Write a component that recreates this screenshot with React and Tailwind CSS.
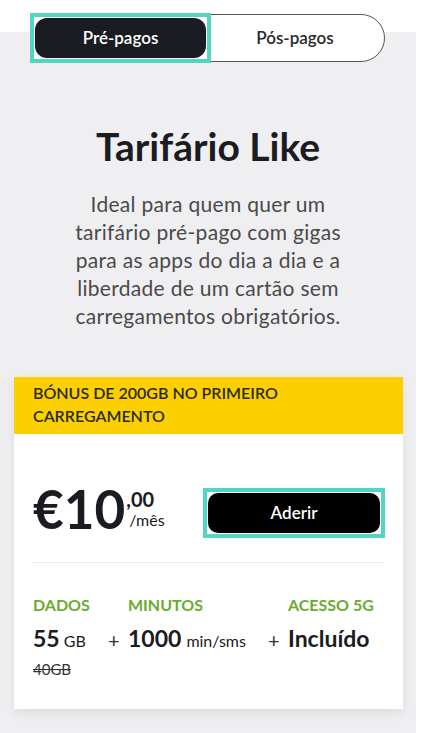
export default function App() {
  return (
    <div className="w-[422px] h-[733px] bg-white overflow-hidden" style={{ fontFamily: 'Lato, "Open Sans", sans-serif' }}>
      {/* Toggle */}
      <div className="relative z-10 pt-[13px] pl-[30px]">
        <div className="relative w-[355px] h-[49px]">
          <div className="absolute left-[5px] top-[1px] w-[350px] h-[48px] rounded-full border-[1.5px] border-[#555] bg-white flex">
            <div className="w-[170px]" />
            <div className="flex-1 flex items-center justify-center text-[17px] font-semibold text-[#2a2a2a]">Pós-pagos</div>
          </div>
          <div className="absolute left-0 top-0 w-[181px] h-[50px] border-[4px] border-[#52d6c1] p-[1px] bg-white">
            <div className="w-full h-full rounded-[12px] bg-[#1b1b22] flex items-center justify-center text-[17px] font-semibold text-white">
              Pré-pagos
            </div>
          </div>
        </div>
      </div>

      {/* Gray panel */}
      <div className="-mt-[30px] w-[416px] h-[720px] bg-[#efeff1] pt-[93px]">
        <h1 className="text-center text-[39px] font-bold text-[#1b1b22] leading-[42px]">Tarifário Like</h1>
        <p className="mt-[23px] text-center text-[21px] leading-[28px] tracking-[0.3px] text-[#4a4a4a]">
          Ideal para quem quer um<br />
          tarifário pré-pago com gigas<br />
          para as apps do dia a dia e a<br />
          liberdade de um cartão sem<br />
          carregamentos obrigatórios.
        </p>

        {/* Card */}
        <div className="mt-[47px] ml-[14px] w-[389px] bg-white shadow-[0_4px_10px_rgba(0,0,0,0.08)]">
          <div className="bg-[#fcd000] h-[57px] px-[19px] pt-[4px] text-[16px] leading-[23px] font-semibold text-[#2a2a1a] uppercase">
            Bónus de 200GB no primeiro<br />carregamento
          </div>
          <div className="px-[19px] pt-[54px] pb-[28px]">
            <div className="flex items-center justify-between">
              <div className="flex items-start text-[#1b1b22] h-[50px] pt-[1px]">
                <span className="text-[53px] font-bold leading-[40px]">€10</span>
                <div className="flex flex-col ml-[1px]">
                  <span className="text-[20px] font-bold leading-[20px]">,00</span>
                  <span className="text-[16px] leading-[18px] ml-[3px] mt-[2px]">/mês</span>
                </div>
              </div>
              <div className="border-[4px] border-[#52d6c1] p-[1px] mr-[-1px]">
                <button className="w-[172px] h-[40px] rounded-[10px] bg-black text-white text-[17px] font-semibold">Aderir</button>
              </div>
            </div>

            <div className="mt-[24px] h-[1px] bg-[#ececec]" />

            <div className="mt-[33px] flex items-start text-[#1b1b22]">
              <div className="w-[75px]">
                <div className="text-[16px] font-bold text-[#6cab32] leading-[18px]">DADOS</div>
                <div className="mt-[12px] leading-[24px] whitespace-nowrap">
                  <span className="text-[23px] font-bold">55</span>
                  <span className="text-[16px] ml-[4px]">GB</span>
                </div>
                <div className="mt-[5px] text-[15px] line-through text-[#333]">40GB</div>
              </div>
              <div className="w-[20px] mt-[29px] text-[20px] text-[#333]">+</div>
              <div className="w-[140px]">
                <div className="text-[16px] font-bold text-[#6cab32] leading-[18px]">MINUTOS</div>
                <div className="mt-[12px] leading-[24px] whitespace-nowrap">
                  <span className="text-[23px] font-bold">1000</span>
                  <span className="text-[16px] ml-[5px]">min/sms</span>
                </div>
              </div>
              <div className="w-[20px] mt-[29px] text-[20px] text-[#333]">+</div>
              <div>
                <div className="text-[16px] font-bold text-[#6cab32] leading-[18px]">ACESSO 5G</div>
                <div className="mt-[12px] leading-[24px] text-[23px] font-bold">Incluído</div>
              </div>
            </div>
          </div>
        </div>
      </div>
    </div>
  );
}
